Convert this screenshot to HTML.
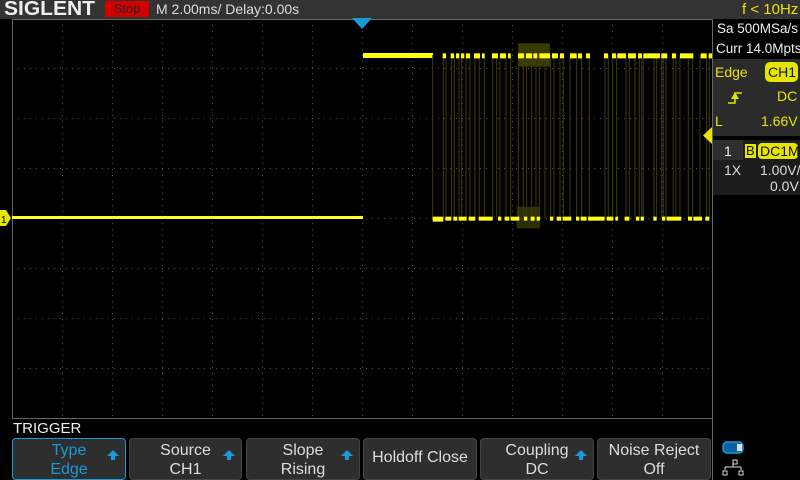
<!DOCTYPE html>
<html><head><meta charset="utf-8"><style>
*{margin:0;padding:0;box-sizing:border-box}
body{width:800px;height:480px;background:#000;position:relative;overflow:hidden;font-family:"Liberation Sans",sans-serif}
.a{position:absolute;white-space:nowrap}
.btn{position:absolute;top:438px;height:42px;background:#2e2e2e;border:1px solid #444;border-radius:4px;color:#ddd;font-size:16px;text-align:center;line-height:19px;padding-top:2px}
.btn .ar{position:absolute;right:6px;top:11px;width:0;height:0;border-left:6px solid transparent;border-right:6px solid transparent;border-bottom:6px solid #1a9ad6}
.btn .ar:after{content:"";position:absolute;left:-2px;top:6px;width:4px;height:4px;background:#1a9ad6}
.y{color:#e6e600}
</style></head><body>
<div class="a" style="left:0;top:0;width:800px;height:19px;background:#333"></div>
<div class="a" style="left:4px;top:-2px;font-size:20px;font-weight:bold;color:#eee;letter-spacing:0px;transform:scaleX(1.05);transform-origin:left">SIGLENT</div>
<div class="a" style="left:105px;top:1px;width:44px;height:16px;background:#d40000;color:#222;font-size:13px;text-align:center;line-height:16px">Stop</div>
<div class="a" style="left:156px;top:1px;font-size:14px;color:#ddd">M 2.00ms/ Delay:0.00s</div>
<div class="a y" style="left:742px;top:1px;font-size:15px">f &lt; 10Hz</div>
<svg class="a" style="left:0;top:0" width="800" height="480">
<g stroke="#555" stroke-width="1" stroke-dasharray="1 5" fill="none">
<path d="M62.5 19V418M112.5 19V418M162.5 19V418M212.5 19V418M262.5 19V418M312.5 19V418M362.5 19V418M412.5 19V418M462.5 19V418M512.5 19V418M562.5 19V418M612.5 19V418M662.5 19V418"/>
<path d="M12 68.5H712M12 118.5H712M12 168.5H712M12 218.5H712M12 268.5H712M12 318.5H712M12 368.5H712"/>
</g>
<rect x="12.5" y="19.5" width="700" height="399" fill="none" stroke="#666"/>
<rect x="12" y="216" width="351" height="3" fill="#ffff20"/>
<rect x="363" y="53" width="70" height="5" fill="#ffff10"/>
<g transform="translate(360,40) scale(0.3333)">
<rect x="474" y="10" width="96" height="70" fill="#3a3a00"/>
<rect x="470" y="500" width="70" height="65" fill="#2e2e00"/>
<g stroke="#3c3c08" stroke-width="3">
<path d="M218 45V535M250 45V535M258 45V535M275 45V535M283 45V535M297 45V535M305 45V535M318 45V535M330 45V535M345 45V535M358 45V535M373 45V535M398 45V535M410 45V535M420 45V535M438 45V535M452 45V535M475 45V535M490 45V535M500 45V535M515 45V535M528 45V535M538 45V535M555 45V535M572 45V535M582 45V535M600 45V535M610 45V535M630 45V535M650 45V535M665 45V535M688 45V535M735 45V535M745 45V535M758 45V535M770 45V535M798 45V535M808 45V535M825 45V535M838 45V535M845 45V535M850 45V535M882 45V535M890 45V535M905 45V535M910 45V535M918 45V535M940 45V535M948 45V535M960 45V535M985 45V535M998 45V535M1020 45V535M1040 45V535M1048 45V535"/>
</g>
<g fill="#ffff10">
<rect x="248" y="40" width="10" height="15"/><rect x="272" y="40" width="10" height="15"/><rect x="288" y="40" width="10" height="15"/><rect x="303" y="40" width="10" height="15"/><rect x="318" y="40" width="12" height="15"/><rect x="342" y="40" width="18" height="15"/><rect x="366" y="40" width="8" height="15"/><rect x="396" y="40" width="18" height="15"/><rect x="420" y="40" width="18" height="15"/><rect x="444" y="40" width="8" height="15"/><rect x="474" y="40" width="18" height="15"/><rect x="498" y="40" width="18" height="15"/><rect x="520" y="40" width="12" height="15"/><rect x="538" y="40" width="32" height="15"/><rect x="576" y="40" width="18" height="15"/><rect x="600" y="40" width="12" height="15"/><rect x="630" y="40" width="20" height="15"/><rect x="654" y="40" width="12" height="15"/><rect x="678" y="40" width="12" height="15"/><rect x="732" y="40" width="12" height="15"/><rect x="756" y="40" width="12" height="15"/><rect x="772" y="40" width="26" height="15"/><rect x="804" y="40" width="24" height="15"/><rect x="834" y="40" width="12" height="15"/><rect x="850" y="40" width="50" height="15"/><rect x="904" y="40" width="18" height="15"/><rect x="936" y="40" width="12" height="15"/><rect x="960" y="40" width="40" height="15"/><rect x="1022" y="40" width="18" height="15"/><rect x="1046" y="40" width="10" height="15"/>
<rect x="218" y="530" width="32" height="15"/><rect x="256" y="530" width="18" height="12"/><rect x="280" y="530" width="12" height="12"/><rect x="296" y="530" width="24" height="12"/><rect x="326" y="530" width="20" height="12"/><rect x="356" y="530" width="42" height="12"/><rect x="414" y="530" width="10" height="12"/><rect x="434" y="530" width="14" height="12"/><rect x="452" y="530" width="26" height="12"/><rect x="492" y="530" width="10" height="12"/><rect x="512" y="530" width="12" height="12"/><rect x="530" y="530" width="10" height="12"/><rect x="570" y="530" width="10" height="12"/><rect x="590" y="530" width="14" height="12"/><rect x="608" y="530" width="26" height="12"/><rect x="648" y="530" width="10" height="12"/><rect x="662" y="530" width="18" height="12"/><rect x="684" y="530" width="50" height="12"/><rect x="740" y="530" width="20" height="12"/><rect x="766" y="530" width="8" height="12"/><rect x="794" y="530" width="14" height="12"/><rect x="828" y="530" width="10" height="12"/><rect x="842" y="530" width="10" height="12"/><rect x="880" y="530" width="10" height="12"/><rect x="906" y="530" width="10" height="12"/><rect x="920" y="530" width="44" height="12"/><rect x="984" y="530" width="12" height="12"/><rect x="1000" y="530" width="26" height="12"/><rect x="1036" y="530" width="12" height="12"/>
</g>
</g>
<polygon points="352,18 372,18 362,29" fill="#1a9ad6"/>
<polygon points="0,210 6,210 11,218 6,226 0,226" fill="#e6e600"/>
<text x="1" y="223" font-size="10" fill="#000" font-family="Liberation Sans">1</text>
<polygon points="712,127 712,144 703,135.5" fill="#e6e600"/>
<rect x="713" y="59" width="87" height="77" fill="#2b2b2b"/>
<rect x="713" y="140" width="87" height="55" fill="#1c1c1c"/>
<rect x="713" y="140" width="30" height="20" fill="#2e2e2e"/>
<line x1="712.5" y1="19" x2="712.5" y2="480" stroke="#666"/>
<rect x="765" y="62" width="33" height="20" rx="5" fill="#e6e600"/>
<path d="M728 103H735V93H742" stroke="#e6e600" stroke-width="1.5" fill="none"/>
<polygon points="735,92 731,99 739,99" fill="#e6e600"/>
<rect x="745" y="144" width="11" height="14" fill="#e6e600"/>
<rect x="758" y="143" width="40" height="16" rx="4" fill="#e6e600"/>
<rect x="723" y="442" width="20" height="11" rx="4" fill="#0d5fa0" stroke="#1a9ad6" stroke-width="1.5"/>
<rect x="737" y="444" width="5" height="7" fill="#ddd"/>
<path d="M733 460h4v4h-4zM733 464v3M725 467h16M725 467v3M741 467v3M723 471h4v4h-4zM739 471h4v4h-4z" stroke="#ddd" fill="none"/>
</svg>
<div class="a" style="left:717px;top:21px;font-size:13.5px;color:#eee">Sa 500MSa/s</div>
<div class="a" style="left:716px;top:41px;font-size:13.5px;color:#eee">Curr 14.0Mpts</div>
<div class="a y" style="left:715px;top:64px;font-size:14px">Edge</div>
<div class="a" style="left:768px;top:64px;font-size:14px;color:#111">CH1</div>
<div class="a y" style="left:777px;top:88px;font-size:14px">DC</div>
<div class="a y" style="left:715px;top:113px;font-size:14px">L</div>
<div class="a y" style="left:761px;top:113px;font-size:14px">1.66V</div>
<div class="a" style="left:724px;top:143px;font-size:14px;color:#eee">1</div>
<div class="a" style="left:746px;top:143px;font-size:13px;color:#111">B</div>
<div class="a" style="left:760px;top:143px;font-size:14px;color:#111">DC1M</div>
<div class="a" style="left:724px;top:162px;font-size:14px;color:#ddd">1X</div>
<div class="a" style="left:760px;top:162px;font-size:14px;color:#ddd">1.00V/</div>
<div class="a" style="left:770px;top:178px;font-size:14px;color:#ddd">0.0V</div>
<div class="a" style="left:13px;top:420px;font-size:15px;color:#eee">TRIGGER</div>
<div class="btn" style="left:12px;width:114px;border-color:#1a9ad6;color:#1a9ad6">Type<br>Edge<span class="ar"></span></div>
<div class="btn" style="left:129px;width:113px">Source<br>CH1<span class="ar"></span></div>
<div class="btn" style="left:246px;width:114px">Slope<br>Rising<span class="ar"></span></div>
<div class="btn" style="left:363px;width:114px;line-height:38px;padding-top:0">Holdoff Close</div>
<div class="btn" style="left:480px;width:114px">Coupling<br>DC<span class="ar"></span></div>
<div class="btn" style="left:597px;width:114px">Noise Reject<br>Off</div>
</body></html>
